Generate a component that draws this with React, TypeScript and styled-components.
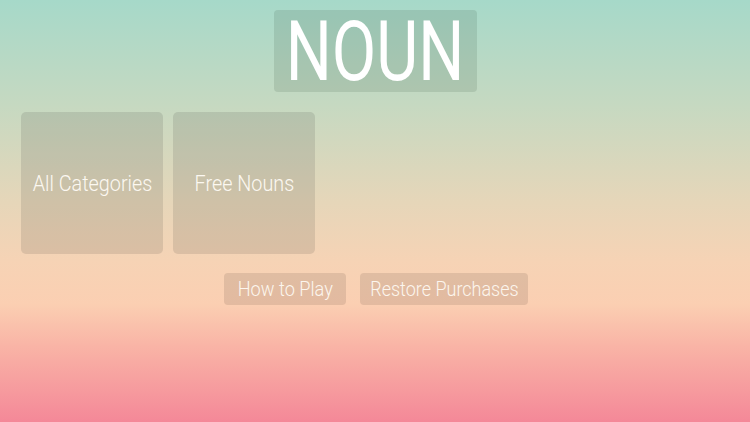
import React from "react";
import styled, { createGlobalStyle } from "styled-components";

const Global = createGlobalStyle`
  html, body { margin: 0; padding: 0; height: 100%; }
  body {
    font-family: Roboto, "Open Sans", sans-serif;
    background: linear-gradient(180deg, #a6d9c9 0%, #c6d9c1 25%, #e6d6b9 48%, #f6d3b5 62%, #fbcfb2 72%, #f9b4a6 82%, #f48898 100%);
    overflow: hidden;
  }
  #root { height: 422px; }
`;

const Page = styled.div`
  width: 750px;
  height: 422px;
  display: flex;
  flex-direction: column;
  align-items: center;
`;

const Title = styled.div`
  margin-top: 10px;
  width: 203px;
  height: 82px;
  border-radius: 4px;
  background: rgba(40, 60, 50, 0.13);
  display: flex;
  align-items: center;
  justify-content: center;
`;

const Squeeze = styled.span<{ $sx: number }>`
  display: inline-block;
  transform: scaleX(${(p) => p.$sx});
  white-space: nowrap;
`;

const TitleText = styled.span`
  color: #fff;
  font-weight: 400;
  font-size: 84px;
  line-height: 1;
  margin-top: 2px;
`;

const TileRow = styled.div`
  align-self: stretch;
  display: flex;
  gap: 10px;
  padding-left: 21px;
  margin-top: 20px;
`;

const Tile = styled.div`
  width: 142px;
  height: 142px;
  border-radius: 5px;
  background: rgba(40, 40, 40, 0.12);
  display: flex;
  align-items: center;
  justify-content: center;
  color: #fcf8f1;
  font-weight: 300;
  font-size: 22px;
`;

const ButtonRow = styled.div`
  display: flex;
  gap: 14px;
  margin-top: 19px;
  margin-left: 2px;
`;

const Button = styled.div<{ $w: number }>`
  width: ${(p) => p.$w}px;
  height: 32px;
  border-radius: 4px;
  background: rgba(60, 40, 30, 0.12);
  display: flex;
  align-items: center;
  justify-content: center;
  color: #fcf6ee;
  font-weight: 300;
  font-size: 20px;
`;

export default function App() {
  return (
    <>
      <Global />
      <Page>
        <Title>
          <TitleText>
            <Squeeze $sx={0.77}>NOUN</Squeeze>
          </TitleText>
        </Title>
        <TileRow>
          <Tile>
            <Squeeze $sx={0.9}>All Categories</Squeeze>
          </Tile>
          <Tile>
            <Squeeze $sx={0.9}>Free Nouns</Squeeze>
          </Tile>
        </TileRow>
        <ButtonRow>
          <Button $w={122}>
            <Squeeze $sx={0.91}>How to Play</Squeeze>
          </Button>
          <Button $w={168}>
            <Squeeze $sx={0.9}>Restore Purchases</Squeeze>
          </Button>
        </ButtonRow>
      </Page>
    </>
  );
}
